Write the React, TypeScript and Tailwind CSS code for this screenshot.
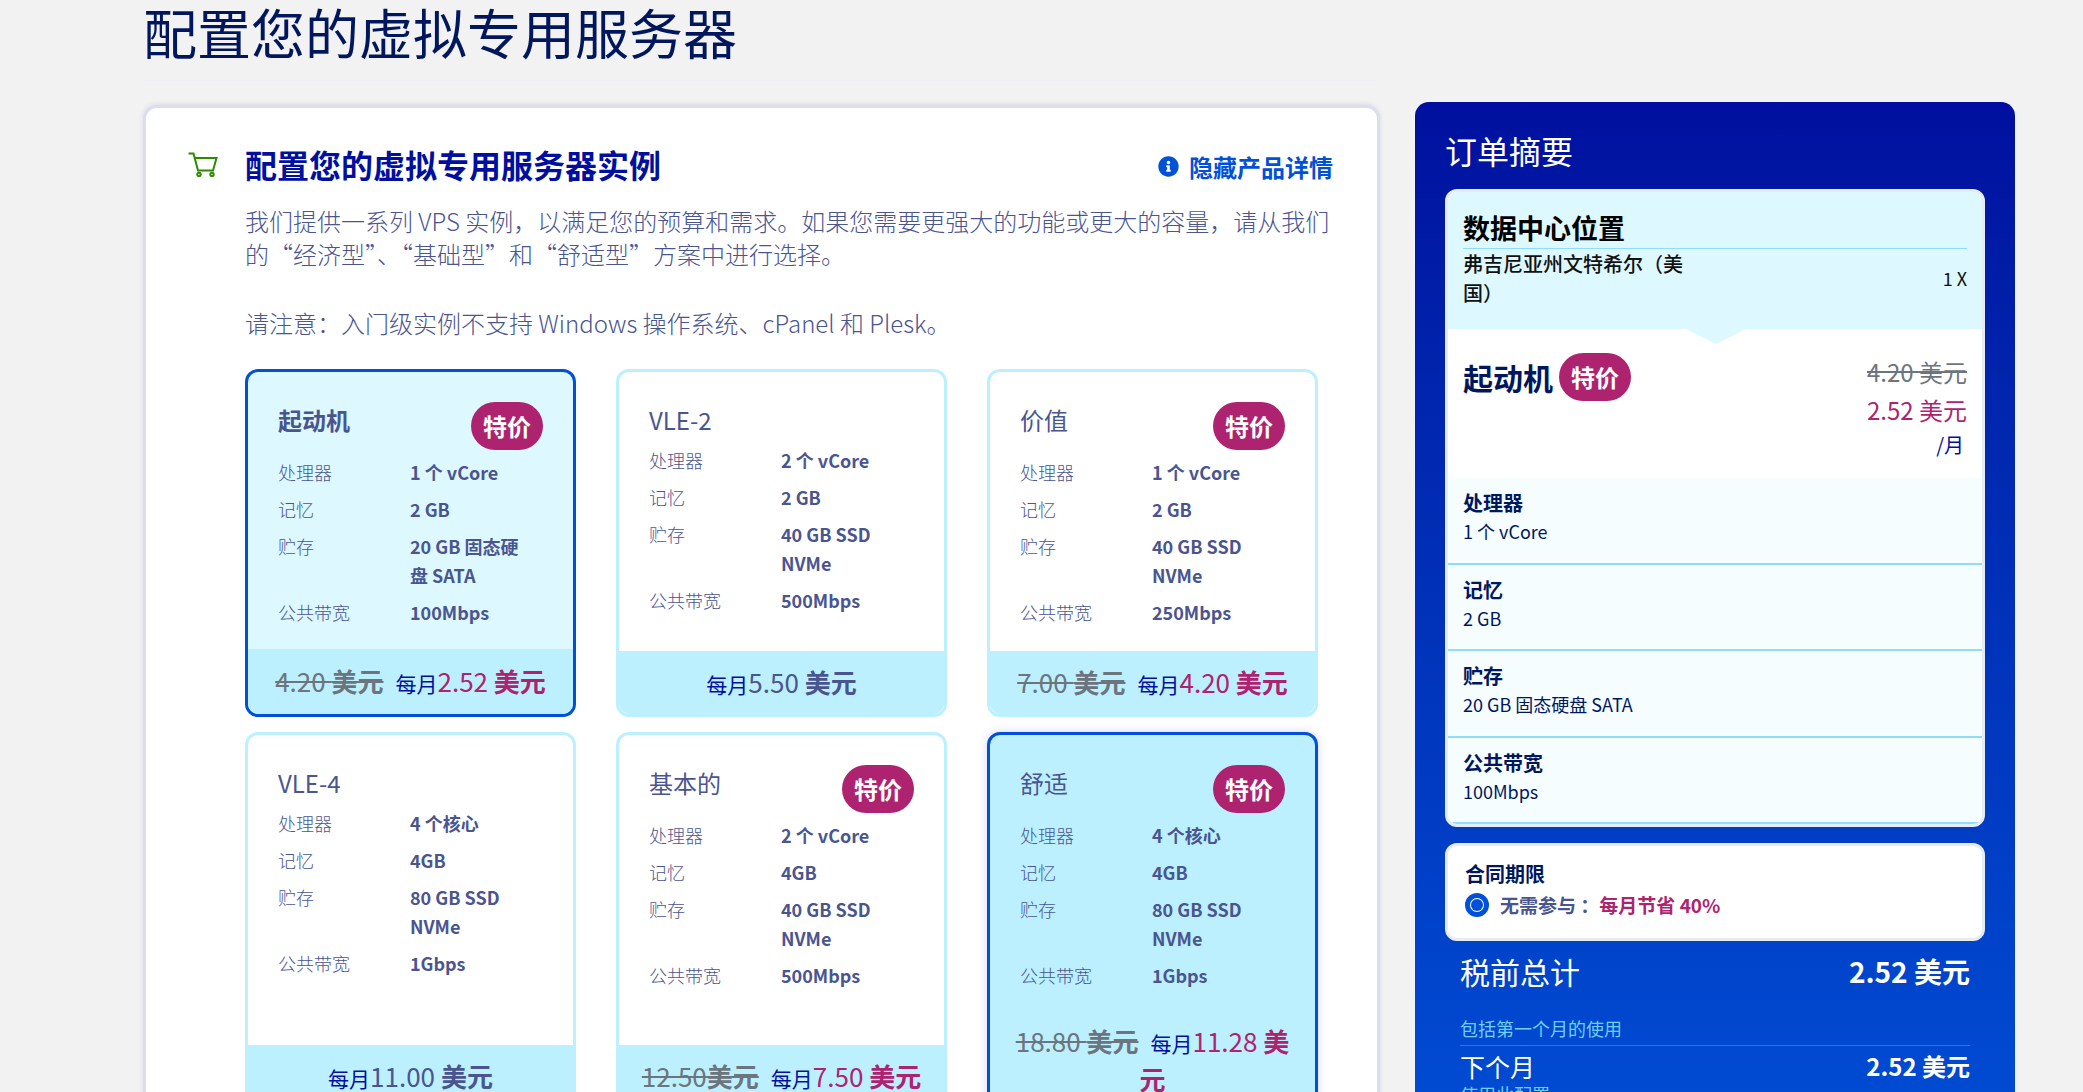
import { Fragment, type ReactNode } from "react";
import { FaInfoCircle } from "react-icons/fa";

type Spec = { label: string; value: string };

type Plan = {
  name: string;
  badge?: boolean;
  bold?: boolean;
  tone?: "plain" | "active" | "hover";
  footerHeight: string;
  specs: Spec[];
  oldPrice?: string;
  price: string;
};

function specs(cpu: string, mem: string, disk: string, net: string): Spec[] {
  return [
    { label: "处理器", value: cpu },
    { label: "记忆", value: mem },
    { label: "贮存", value: disk },
    { label: "公共带宽", value: net },
  ];
}

const plans: Plan[] = [
  { name: "起动机", badge: true, bold: true, tone: "active", footerHeight: "h-[65px]", specs: specs("1 个 vCore", "2 GB", "20 GB 固态硬盘 SATA", "100Mbps"), oldPrice: "4.20 ", price: "2.52 " },
  { name: "VLE-2", footerHeight: "h-[63px]", specs: specs("2 个 vCore", "2 GB", "40 GB SSD NVMe", "500Mbps"), price: "5.50 " },
  { name: "价值", badge: true, footerHeight: "h-[63px]", specs: specs("1 个 vCore", "2 GB", "40 GB SSD NVMe", "250Mbps"), oldPrice: "7.00 ", price: "4.20 " },
  { name: "VLE-4", footerHeight: "h-[64px]", specs: specs("4 个核心", "4GB", "80 GB SSD NVMe", "1Gbps"), price: "11.00 " },
  { name: "基本的", badge: true, footerHeight: "h-[64px]", specs: specs("2 个 vCore", "4GB", "40 GB SSD NVMe", "500Mbps"), oldPrice: "12.50", price: "7.50 " },
  { name: "舒适", badge: true, tone: "hover", footerHeight: "h-[99px]", specs: specs("4 个核心", "4GB", "80 GB SSD NVMe", "1Gbps"), oldPrice: "18.80 ", price: "11.28 " },
];

const summaryRows = [
  { label: "处理器", value: "1 个 vCore" },
  { label: "记忆", value: "2 GB" },
  { label: "贮存", value: "20 GB 固态硬盘 SATA" },
  { label: "公共带宽", value: "100Mbps" },
];

function Badge() {
  return (
    <span className="flex h-[48px] w-[72px] shrink-0 items-center justify-center rounded-[24px] bg-[#ae2370] text-[24px] leading-none font-bold text-white">
      特价
    </span>
  );
}

function PlanCard({ plan }: { plan: Plan }) {
  const tone = plan.tone ?? "plain";
  const shell =
    tone === "active"
      ? "border-[#0050d8] bg-[#ddf8ff]"
      : tone === "hover"
        ? "border-[#0050d8] bg-[#bcf0ff] shadow-[0_0_8px_rgba(90,90,200,0.25)]"
        : "border-[#bcf0ff] bg-white";

  return (
    <div className={`flex flex-col rounded-[13px] border-[3px] ${shell}`}>
      <div className="px-[30px] pt-[30px] text-[#4a5590]">
        <div className="flex items-start justify-between">
          <span className={`text-[24px] leading-[36px] ${plan.bold ? "font-bold" : ""}`}>{plan.name}</span>
          {plan.badge && <Badge />}
        </div>
        <div className="mt-[8px] flex flex-col gap-[8px]">
          {plan.specs.map((s) => (
            <div key={s.label} className="flex text-[18px] leading-[29px]">
              <span className="w-[132px] shrink-0 font-light">{s.label}</span>
              <span className="w-[125px] font-bold">{s.value}</span>
            </div>
          ))}
        </div>
      </div>
      <div className={`mt-auto flex items-center justify-center rounded-b-[11px] bg-[#bcf0ff] px-[15px] ${plan.footerHeight}`}>
        <div className="text-center text-[26px] leading-[36px] text-[#4a5590]">
          {plan.oldPrice && (
            <span className="mr-[12px] text-[#6c757d] line-through">
              {plan.oldPrice}
              <b>美元</b>
            </span>
          )}
          <span className="text-[21px] text-[#000f9f]">每月</span>
          <span className={plan.oldPrice ? "text-[#ae2370]" : ""}>
            {plan.price}
            <b>美元</b>
          </span>
        </div>
      </div>
    </div>
  );
}

function CartIcon() {
  return (
    <svg viewBox="0 0 30 25" className="h-[25px] w-[30px]" fill="none" stroke="#2e8b00" strokeWidth="2">
      <path d="M0.5 1.5h5l4.5 17h15l3.5-12.500h-22" />
      <circle cx="11" cy="22.500" r="1.700" />
      <circle cx="24" cy="22.500" r="1.700" />
    </svg>
  );
}

function OrderLine({ left, right }: { left: ReactNode; right: ReactNode }) {
  return (
    <div className="flex items-center justify-between">
      {left}
      {right}
    </div>
  );
}

export default function App() {
  return (
    <div className="flex h-screen gap-[35px] overflow-hidden bg-[#f2f2f2] pl-[143px] font-['Noto_Sans_CJK_SC','Noto_Sans',sans-serif]">
      <div className="w-[1237px] shrink-0">
        <div className="h-[81px] border-b border-[#eeeff8]">
          <h1 className="text-[54px] leading-[64px] text-[#00175e]">配置您的虚拟专用服务器</h1>
        </div>
        <div className="mt-[24px] rounded-[14px] border-[3px] border-[#dcdeee] bg-white pl-[42px] pr-[44px] pt-[34px] shadow-[0_-1px_4px_rgba(120,120,190,0.2)]">
          <div className="flex items-center">
            <CartIcon />
            <h2 className="ml-[27px] text-[32px] leading-[44px] font-bold text-[#000f9f]">配置您的虚拟专用服务器实例</h2>
            <a className="ml-auto flex items-center gap-[10px] pt-[4px] text-[24px] leading-[33px] font-bold text-[#0050d8]">
              <FaInfoCircle className="h-[21px] w-[21px]" />
              隐藏产品详情
            </a>
          </div>
          <div className="ml-[57px] mt-[18px] text-[24px] leading-[33px] font-light text-[#4a5590]">
            <p>我们提供一系列 VPS 实例，以满足您的预算和需求。如果您需要更强大的功能或更大的容量，请从我们的“经济型”、“基础型”和“舒适型”方案中进行选择。</p>
            <p className="mt-[36px]">请注意：入门级实例不支持 Windows 操作系统、cPanel 和 Plesk。</p>
          </div>
          <div className="ml-[57px] mt-[30px] grid w-[1073px] grid-cols-[331px_331px_331px] grid-rows-[348px_380px] gap-x-[40px] gap-y-[15px]">
            {plans.map((p) => (
              <PlanCard key={p.name} plan={p} />
            ))}
          </div>
        </div>
      </div>

      <aside className="mt-[102px] h-[1100px] w-[600px] shrink-0 rounded-t-[14px] bg-gradient-to-b from-[#000f9f] to-[#0050d8] px-[30px]">
        <h3 className="pt-[27px] text-[32px] leading-[42px] text-white">订单摘要</h3>
        <div className="mt-[18px] overflow-hidden rounded-[12px] border-[3px] border-[#e6edf2] bg-[#f5fdff]">
          <div className="relative h-[137px] bg-[#ddf8ff] px-[15px]">
            <div className="border-b border-[#8fdcff] pt-[17px] pb-[1px] text-[27px] leading-[38px] font-bold text-black">数据中心位置</div>
            <div className="flex items-center justify-between">
              <span className="w-[230px] text-[20px] leading-[29px] font-medium text-[#111]">弗吉尼亚州文特希尔（美国）</span>
              <span className="text-[18px] text-[#111]">1 X</span>
            </div>
          </div>
          <div className="relative flex h-[149px] justify-between bg-white px-[15px] pt-[24px]">
            <span className="absolute left-[238px] top-0 h-0 w-0 border-x-[30px] border-t-[15px] border-x-transparent border-t-[#ddf8ff]" />
            <div className="flex items-start gap-[6px]">
              <span className="text-[30px] leading-[48px] font-bold text-[#00175e]">起动机</span>
              <Badge />
            </div>
            <div className="flex flex-col items-end text-[24px] leading-[38px]">
              <span className="text-[#6c757d] line-through">4.20 美元</span>
              <span className="text-[#ae2370]">2.52 美元</span>
              <span className="pr-[3px] text-[20px] leading-[32px] text-[#000f9f]">/月</span>
            </div>
          </div>
          {summaryRows.map((r) => (
            <div key={r.label} className="h-[86.500px] border-b-2 border-[#8fdcff] px-[15px] pt-[11px] text-[#00175e]">
              <div className="text-[20px] leading-[28px] font-bold">{r.label}</div>
              <div className="text-[18px] leading-[29px]">{r.value}</div>
            </div>
          ))}
        </div>

        <div className="mt-[16px] h-[98px] rounded-[12px] border-[3px] border-[#e6edf2] bg-white px-[17px] pt-[13px]">
          <div className="text-[20px] leading-[29px] font-bold text-[#00175e]">合同期限</div>
          <div className="mt-[5px] flex items-center gap-[11px]">
            <span className="flex h-[24px] w-[24px] items-center justify-center rounded-full border-[5px] border-[#0050d8]">
              <span className="h-[12px] w-[12px] rounded-full bg-[#0050d8]" />
            </span>
            <span className="text-[19px] leading-[24px] font-bold text-[#4a5590]">
              无需参与 ：<span className="text-[#ae2370]">每月节省 40%</span>
            </span>
          </div>
        </div>

        <div className="px-[15px] text-white">
          <div className="mt-[9px]">
            <OrderLine
              left={<span className="text-[30px] leading-[42px]">税前总计</span>}
              right={<span className="text-[28px] leading-[42px] font-bold">2.52 美元</span>}
            />
          </div>
          <div className="mt-[22px] border-b border-[#1a7fe0] pb-[3px] text-[18px] leading-[28px] text-[#6fcfff]">包括第一个月的使用</div>
          <OrderLine
            left={<span className="text-[25px] leading-[40px]">下个月</span>}
            right={<span className="text-[24px] leading-[40px] font-bold">2.52 美元</span>}
          />
          <Fragment>
            <div className="-mt-[5px] text-[18px] leading-[26px] text-[#6fcfff]">使用此配置</div>
          </Fragment>
        </div>
      </aside>
    </div>
  );
}
